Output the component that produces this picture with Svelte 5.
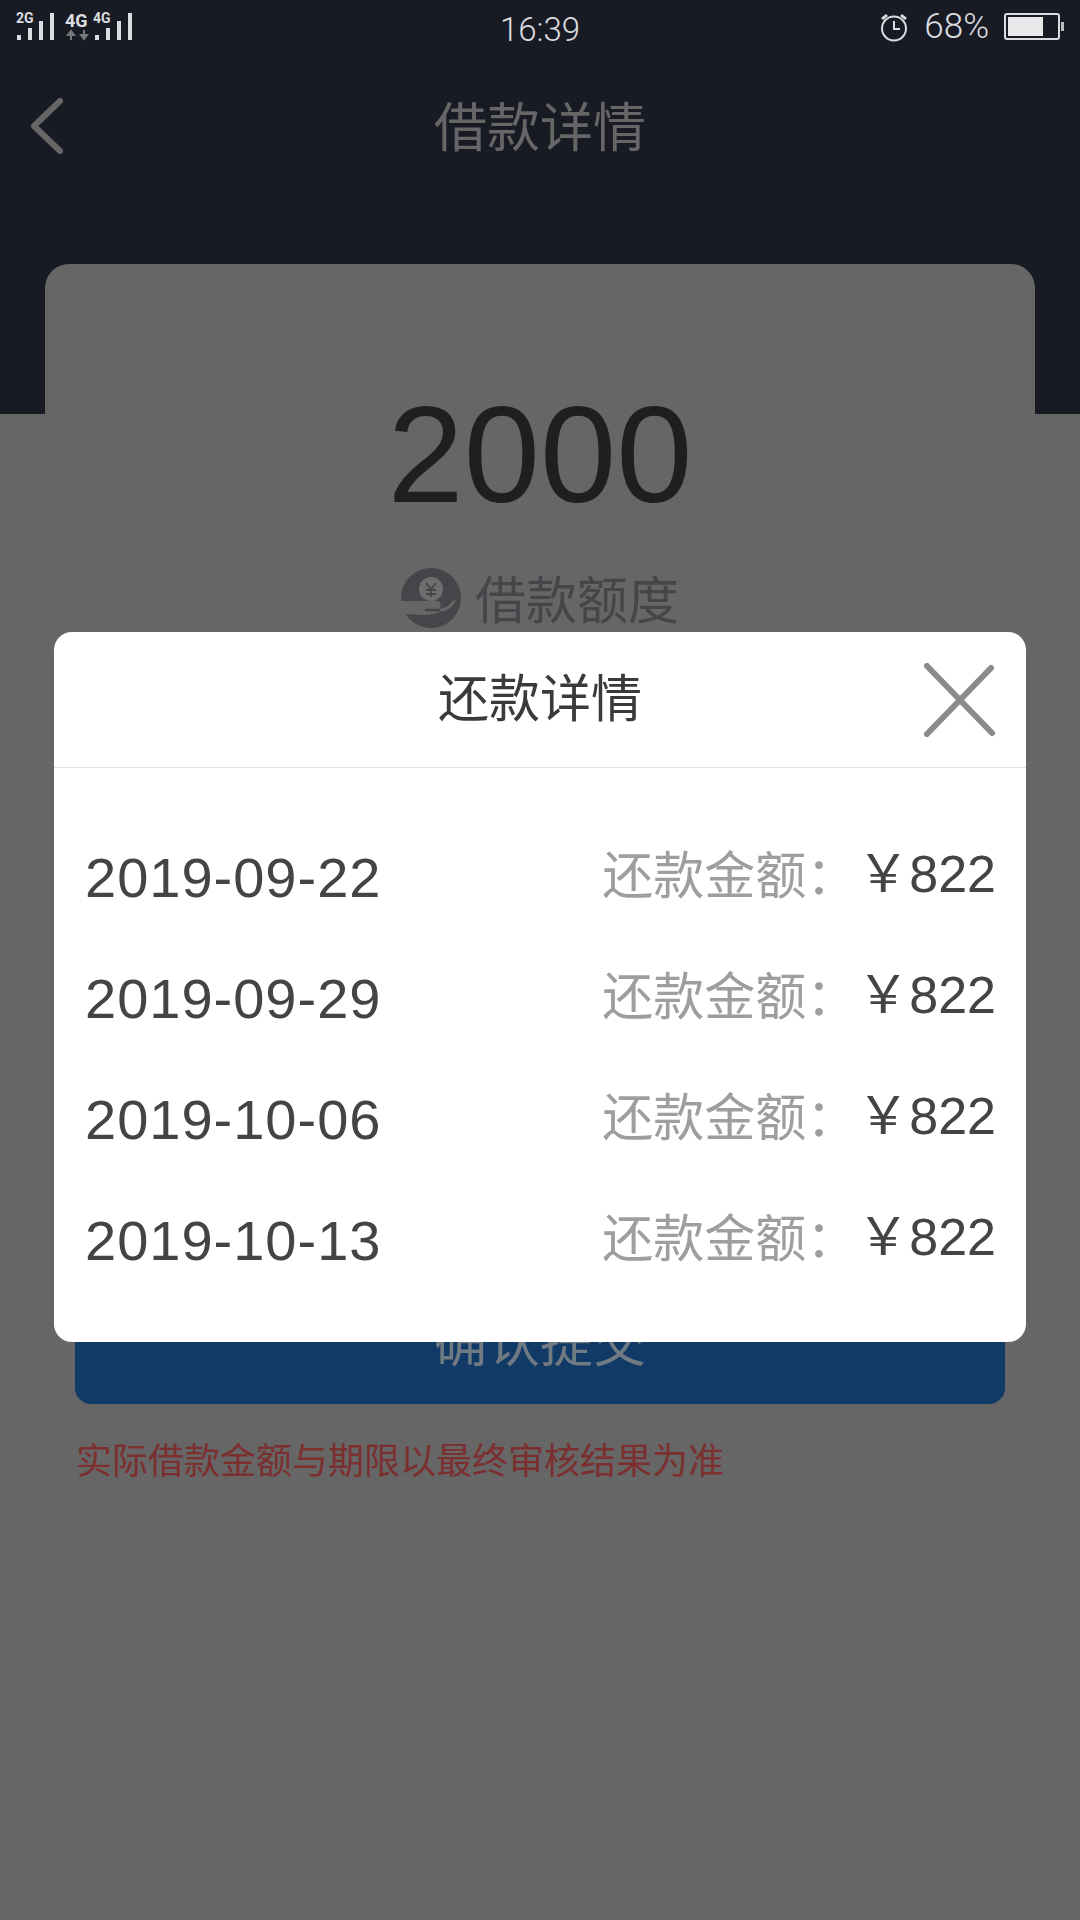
<script>
  const colon = '\uFF1A';
  const yen = '\uFFE5';
  const rows = [
    { date: '2019-09-22', amount: '822' },
    { date: '2019-09-29', amount: '822' },
    { date: '2019-10-06', amount: '822' },
    { date: '2019-10-13', amount: '822' }
  ];
</script>

<div class="page">
  <header class="top">
    <div class="status">
      <svg class="signals" width="124" height="40" viewBox="16 5 124 40">
        <text x="16" y="23" class="net">2G</text>
        <g fill="#dcdde0">
          <rect x="17" y="35" width="4" height="5" /><rect x="28" y="28" width="4" height="12" /><rect x="39" y="21" width="4" height="19" /><rect x="50" y="13" width="4" height="27" />
        </g>
        <text x="65" y="27" class="net big">4G</text>
        <path d="M71 40v-6M68 35l3-4 3 4zM84 30v6M81 35l3 4 3-4z" stroke="#77797d" stroke-width="2" fill="#77797d" />
        <text x="93" y="23" class="net">4G</text>
        <g fill="#dcdde0">
          <rect x="95" y="35" width="4" height="5" /><rect x="106" y="28" width="4" height="12" /><rect x="117" y="21" width="4" height="19" /><rect x="128" y="13" width="4" height="27" />
        </g>
      </svg>
      <span class="clock">16:39</span>
      <div class="right">
        <svg width="30" height="30" viewBox="0 0 30 30" fill="none" stroke="#dcdde0">
          <circle cx="15" cy="16.5" r="12" stroke-width="2" />
          <path d="M15 9v8h6" stroke-width="2" />
          <path d="M2 6l5-4 2 2-5 4zM28 6l-5-4-2 2 5 4z" fill="#dcdde0" stroke="none" />
        </svg>
        <span class="pct">68%</span>
        <svg width="60" height="28" viewBox="0 0 60 28">
          <rect x="1" y="1" width="54" height="25" rx="2" fill="none" stroke="#dcdde0" stroke-width="2" />
          <rect x="4" y="4" width="35" height="19" fill="#e8e9ea" />
          <rect x="57" y="9" width="3" height="9" fill="#bbbcc0" />
        </svg>
      </div>
    </div>
    <div class="nav">
      <svg class="back" width="34" height="56" viewBox="0 0 34 56" fill="none">
        <path d="M30 3L4 28l26 25" stroke="#666" stroke-width="6" stroke-linecap="round" stroke-linejoin="round" />
      </svg>
      <h1>借款详情</h1>
    </div>
  </header>

  <main class="content">
    <section class="card">
      <div class="total">2000</div>
      <div class="quota">
        <svg width="60" height="60" viewBox="0 0 60 60">
          <circle cx="30" cy="30" r="30" fill="#45464a" />
          <circle cx="30" cy="21" r="12" fill="#6e6e6e" />
          <path d="M25 15l5 6 5-6M30 21v8M25 22h10M25 26h10" stroke="#45464a" stroke-width="1.8" fill="none" />
          <path d="M-1 33H36C40 33 41 38 38 41L46 39L54 31C56 33 50 41 44 43H40C36 46 28 47 22 47C15 47 10 46 5 46L-1 46Z" fill="#666" />
          <path d="M25 42H38" stroke="#45464a" stroke-width="2.5" stroke-linecap="round" />
        </svg>
        <span>借款额度</span>
      </div>
      <button class="submit">确认提交</button>
    </section>
    <p class="note">实际借款金额与期限以最终审核结果为准</p>
  </main>

  <div class="modal">
    <div class="modal-head">
      <h2>还款详情</h2>
      <svg class="close" width="72" height="74" viewBox="0 0 72 74" fill="none">
        <path d="M4 3l65 67M68 5L4 71" stroke="#8b8b8b" stroke-width="6" stroke-linecap="round" />
      </svg>
    </div>
    <ul class="rows">
      {#each rows as row}
        <li>
          <span class="date">{row.date}</span>
          <span class="label">还款金额{colon}</span>
          <span class="amount">{yen}{row.amount}</span>
        </li>
      {/each}
    </ul>
  </div>
</div>

<style>
  :global(body) { margin: 0; background: #666; }
  .page {
    position: relative;
    width: 1080px;
    height: 1920px;
    overflow: hidden;
    background: #666;
    font-family: Roboto, "Noto Sans CJK SC", sans-serif;
  }
  .top { height: 414px; background: #181b23; }
  .status {
    height: 56px;
    display: flex;
    align-items: center;
    justify-content: space-between;
    padding: 0 16px;
    position: relative;
    color: #dcdde0;
  }
  .signals { align-self: flex-start; margin-top: 5px; }
  .net { font: 700 14px Roboto, sans-serif; fill: #dcdde0; }
  .net.big { font-size: 18px; }
  .clock {
    position: absolute;
    left: 0;
    right: 0;
    text-align: center;
    font-size: 33px;
    font-weight: 300;
    top: 11px;
    line-height: 38px;
    color: #dcdde0;
  }
  .right { display: flex; align-items: center; gap: 15px; font-size: 35px; font-weight: 300; margin-top: -2px; }
  .pct { line-height: 38px; }
  .nav { position: relative; height: 100px; display: flex; align-items: center; justify-content: center; margin-top: 42px; }
  .back { position: absolute; left: 30px; top: 0; }
  h1 { margin: -38px 0 0; font-weight: 400; font-size: 53px; color: #666; line-height: 72px; }
  .content { padding: 0 45px; margin-top: -150px; }
  .card {
    height: 1139px;
    box-sizing: border-box;
    background: #666;
    border-radius: 24px 24px 0 0;
    padding: 0 30px;
    display: flex;
    flex-direction: column;
    align-items: center;
  }
  .total { font-family: "Liberation Sans", sans-serif; font-size: 137px; line-height: 150px; color: #1f1f1f; margin-top: 116px; }
  .quota { display: flex; align-items: center; gap: 14px; margin-top: 34px; color: #45464a; font-size: 51px; line-height: 60px; }
  .quota span { margin-top: 8px; }
  .submit {
    width: 930px;
    height: 130px;
    margin-top: 642px;
    flex: none;
    border: none;
    border-radius: 16px;
    background: #123a66;
    color: #6f7a82;
    font: 400 53px Roboto, "Noto Sans CJK SC", sans-serif;
    padding: 0;
  }
  .note {
    margin: 34px 0 0 31px;
    font-size: 36px;
    line-height: 50px;
    color: #7b2f2f;
  }
  .modal {
    position: absolute;
    left: 54px;
    top: 632px;
    width: 972px;
    height: 710px;
    background: #fff;
    border-radius: 18px;
  }
  .modal-head {
    height: 135px;
    border-bottom: 1px solid #e3e3e3;
    display: flex;
    align-items: center;
    justify-content: center;
    position: relative;
  }
  h2 { margin: -10px 0 0; font-size: 51px; font-weight: 400; color: #3a3a3a; }
  .close { position: absolute; right: 31px; top: 31px; }
  .rows { list-style: none; margin: 49px 0 0; padding: 0 30px 0 31px; }
  .rows li { height: 121px; display: flex; align-items: center; color: #444; }
  .date { font-family: "Liberation Sans", sans-serif; font-size: 56px; flex: 1; letter-spacing: 1px; }
  .label { font-size: 51px; color: #9e9e9e; margin-top: -12px; }
  .amount { font-family: "Liberation Sans", "Noto Sans CJK SC", sans-serif; font-size: 52px; margin-top: -16px; }
</style>
